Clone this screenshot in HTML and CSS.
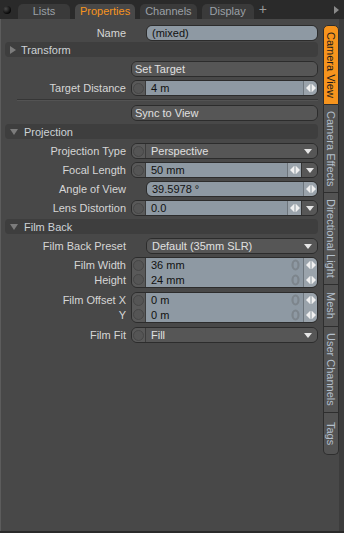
FILE: index.html
```html
<!DOCTYPE html>
<html lang="en">
<head>
    <meta charset="UTF-8">
    <title>Properties</title>
    <link rel="stylesheet" href="styles.css">
</head>
<body>
    <div class="tabbar">
        <span class="orb"></span>
        <div class="tab">Lists</div>
        <div class="tab ativo">Properties</div>
        <div class="tab">Channels</div>
        <div class="tab">Display</div>
        <span class="mais">+</span>
        <span class="seta-dir"></span>
    </div>

    <div class="painel">
        <div class="props">
            <div class="linha primeira">
                <label>Name</label>
                <div class="ctl recuo"><span class="val">(mixed)</span></div>
            </div>

            <div class="grupo fechado"><span class="tri"></span>Transform</div>

            <div class="linha">
                <label></label>
                <div class="ctl"><span class="val botao">Set Target</span></div>
            </div>
            <div class="linha">
                <label>Target Distance</label>
                <div class="ctl">
                    <span class="circ"></span>
                    <span class="val">4 m</span>
                    <span class="setas"><svg width="10" height="8" viewBox="0 0 10 8"><polygon points="0,4 4,0 4,8" /><rect x="4.6" y="0" width="0.8" height="8" /><polygon points="6,0 10,4 6,8" /></svg></span>
                </div>
            </div>
            <div class="divisor"></div>
            <div class="linha">
                <label></label>
                <div class="ctl"><span class="val botao">Sync to View</span></div>
            </div>

            <div class="grupo"><span class="tri"></span>Projection</div>

            <div class="linha">
                <label>Projection Type</label>
                <div class="ctl">
                    <span class="circ"></span>
                    <span class="val menu">Perspective<svg width="8" height="5" viewBox="0 0 8 5"><polygon points="0,0 8,0 4,5" /></svg></span>
                </div>
            </div>
            <div class="linha">
                <label>Focal Length</label>
                <div class="ctl">
                    <span class="circ"></span>
                    <span class="val">50 mm</span>
                    <span class="setas"><svg width="10" height="8" viewBox="0 0 10 8"><polygon points="0,4 4,0 4,8" /><rect x="4.6" y="0" width="0.8" height="8" /><polygon points="6,0 10,4 6,8" /></svg></span>
                    <span class="baixo"><svg width="8" height="5" viewBox="0 0 8 5"><polygon points="0,0 8,0 4,5" /></svg></span>
                </div>
            </div>
            <div class="linha">
                <label>Angle of View</label>
                <div class="ctl recuo">
                    <span class="val">39.5978 °</span>
                    <span class="setas"><svg width="10" height="8" viewBox="0 0 10 8"><polygon points="0,4 4,0 4,8" /><rect x="4.6" y="0" width="0.8" height="8" /><polygon points="6,0 10,4 6,8" /></svg></span>
                </div>
            </div>
            <div class="linha">
                <label>Lens Distortion</label>
                <div class="ctl">
                    <span class="circ"></span>
                    <span class="val">0.0</span>
                    <span class="setas"><svg width="10" height="8" viewBox="0 0 10 8"><polygon points="0,4 4,0 4,8" /><rect x="4.6" y="0" width="0.8" height="8" /><polygon points="6,0 10,4 6,8" /></svg></span>
                    <span class="baixo"><svg width="8" height="5" viewBox="0 0 8 5"><polygon points="0,0 8,0 4,5" /></svg></span>
                </div>
            </div>

            <div class="grupo"><span class="tri"></span>Film Back</div>

            <div class="linha">
                <label>Film Back Preset</label>
                <div class="ctl recuo">
                    <span class="val menu">Default (35mm SLR)<svg width="8" height="5" viewBox="0 0 8 5"><polygon points="0,0 8,0 4,5" /></svg></span>
                </div>
            </div>
            <div class="linha dupla">
                <div class="rotulos"><label>Film Width</label><label>Height</label></div>
                <div class="ctl duplo">
                    <div class="sub">
                        <span class="circ"></span>
                        <span class="val">36 mm<svg class="anel" width="9" height="12" viewBox="0 0 9 12"><ellipse cx="4.5" cy="6" rx="3" ry="4.5" /></svg></span>
                        <span class="setas"><svg width="10" height="8" viewBox="0 0 10 8"><polygon points="0,4 4,0 4,8" /><rect x="4.6" y="0" width="0.8" height="8" /><polygon points="6,0 10,4 6,8" /></svg></span>
                    </div>
                    <div class="sub">
                        <span class="circ"></span>
                        <span class="val">24 mm<svg class="anel" width="9" height="12" viewBox="0 0 9 12"><ellipse cx="4.5" cy="6" rx="3" ry="4.5" /></svg></span>
                        <span class="setas"><svg width="10" height="8" viewBox="0 0 10 8"><polygon points="0,4 4,0 4,8" /><rect x="4.6" y="0" width="0.8" height="8" /><polygon points="6,0 10,4 6,8" /></svg></span>
                    </div>
                </div>
            </div>
            <div class="linha dupla">
                <div class="rotulos"><label>Film Offset X</label><label>Y</label></div>
                <div class="ctl duplo">
                    <div class="sub">
                        <span class="circ"></span>
                        <span class="val">0 m<svg class="anel" width="9" height="12" viewBox="0 0 9 12"><ellipse cx="4.5" cy="6" rx="3" ry="4.5" /></svg></span>
                        <span class="setas"><svg width="10" height="8" viewBox="0 0 10 8"><polygon points="0,4 4,0 4,8" /><rect x="4.6" y="0" width="0.8" height="8" /><polygon points="6,0 10,4 6,8" /></svg></span>
                    </div>
                    <div class="sub">
                        <span class="circ"></span>
                        <span class="val">0 m<svg class="anel" width="9" height="12" viewBox="0 0 9 12"><ellipse cx="4.5" cy="6" rx="3" ry="4.5" /></svg></span>
                        <span class="setas"><svg width="10" height="8" viewBox="0 0 10 8"><polygon points="0,4 4,0 4,8" /><rect x="4.6" y="0" width="0.8" height="8" /><polygon points="6,0 10,4 6,8" /></svg></span>
                    </div>
                </div>
            </div>
            <div class="linha">
                <label>Film Fit</label>
                <div class="ctl">
                    <span class="circ"></span>
                    <span class="val menu">Fill<svg width="8" height="5" viewBox="0 0 8 5"><polygon points="0,0 8,0 4,5" /></svg></span>
                </div>
            </div>
        </div>

        <div class="abas">
            <div class="aba ativa">Camera View</div>
            <div class="aba">Camera Effects</div>
            <div class="aba">Directional Light</div>
            <div class="aba">Mesh</div>
            <div class="aba">User Channels</div>
            <div class="aba">Tags</div>
        </div>
    </div>
</body>
</html>
```

FILE: styles.css
```css
* {
    box-sizing: border-box;
}

body {
    margin: 0;
    width: 344px;
    height: 533px;
    overflow: hidden;
    background-color: #484848;
    font-family: "Liberation Sans", Arial, sans-serif;
    font-size: 11px;
}

/* barra de abas de cima */
.tabbar {
    display: flex;
    align-items: flex-end;
    height: 19px;
    background-color: #2a2a2a;
}

.orb {
    align-self: center;
    width: 8px;
    height: 8px;
    margin: 0 7px 0 3px;
    border-radius: 50%;
    background: radial-gradient(circle at 35% 35%, #4a4a4a, #080808 70%);
}

.tab {
    min-width: 52px;
    height: 15px;
    margin-right: 5px;
    padding: 0 5px;
    line-height: 15px;
    text-align: center;
    color: #9aa0a6;
    background-color: #3a3a3a;
    border-radius: 5px 5px 0 0;
}

.tab.ativo {
    color: #f7941d;
    background-color: #484848;
}

.mais {
    align-self: center;
    color: #9a9a9a;
    font-size: 14px;
    line-height: 19px;
}

.seta-dir {
    align-self: center;
    margin-left: auto;
    margin-right: 5px;
    width: 0;
    height: 0;
    border-top: 4px solid transparent;
    border-bottom: 4px solid transparent;
    border-left: 5px solid #8a8a8a;
}

/* painel */
.painel {
    display: flex;
    height: 514px;
    border-bottom: 2px solid #2a2a2a;
}

.props {
    flex: 1;
    padding: 6px 4px 0 0;
    border-left: 1px solid #5c5c5c;
}

.linha {
    display: grid;
    grid-template-columns: 125px 1fr;
    column-gap: 5px;
    align-items: center;
    height: 16px;
    margin-bottom: 3px;
}

.linha.primeira {
    margin-bottom: 1px;
}

.linha label,
.rotulos label {
    text-align: right;
    color: #d6d6d6;
    white-space: nowrap;
}

.linha.dupla {
    height: 31px;
    margin-bottom: 4px;
}

.rotulos {
    display: flex;
    flex-direction: column;
}

.rotulos label {
    height: 15px;
    line-height: 15px;
}

.grupo {
    display: flex;
    align-items: center;
    height: 15px;
    margin: 1px 0 4px 4px;
    padding-left: 5px;
    color: #cdd2d6;
    background-color: #3e3e3e;
    border-radius: 4px;
}

.tri {
    width: 0;
    height: 0;
    margin-right: 6px;
    border-left: 4px solid transparent;
    border-right: 4px solid transparent;
    border-top: 6px solid #7c7c7c;
}

.grupo.fechado .tri {
    margin-right: 5px;
    border-top: 4px solid transparent;
    border-bottom: 4px solid transparent;
    border-left: 6px solid #7c7c7c;
    border-right: 0;
}

.divisor {
    height: 2px;
    margin: 3px 0 4px 16px;
    border-top: 1px solid #363636;
    border-bottom: 1px solid #535353;
}

/* controles */
.ctl {
    display: flex;
    height: 16px;
    border: 1px solid #2c2c2c;
    border-radius: 6px;
    overflow: hidden;
}

.ctl.recuo {
    margin-left: 15px;
}

.ctl.duplo {
    flex-direction: column;
    height: 31px;
}

.sub {
    display: flex;
    height: 15px;
}

.circ {
    display: flex;
    align-items: center;
    justify-content: center;
    width: 14px;
    background-color: #595959;
    border-right: 1px solid #3c3c3c;
}

.circ::after {
    content: "";
    width: 9px;
    height: 9px;
    border-radius: 50%;
    border: 1px solid #474747;
    background-color: #555555;
}

.val {
    display: flex;
    align-items: center;
    flex: 1;
    padding-left: 5px;
    color: #111111;
    background-color: #8e99a3;
    white-space: nowrap;
}

.val.botao {
    padding-left: 3px;
    color: #e0e0e0;
    background-color: #565656;
}

.val.menu {
    justify-content: space-between;
    padding-right: 5px;
    color: #e0e0e0;
    background-color: #565656;
}

.val svg,
.baixo svg {
    fill: #e6e6e6;
}

.val .anel {
    margin-left: auto;
    margin-right: 3px;
    fill: none;
    stroke: #7d858c;
    stroke-width: 2.2;
}

.setas {
    display: flex;
    align-items: center;
    justify-content: center;
    width: 14px;
    background-color: #9aa3ab;
    border-left: 1px solid #6d757c;
}

.setas svg {
    fill: #f0f0f0;
}

.baixo {
    display: flex;
    align-items: center;
    justify-content: center;
    width: 16px;
    background-color: #575757;
    border-left: 1px solid #333333;
}

/* abas verticais */
.abas {
    width: 22px;
    padding: 6px 0 0 1px;
    border-right: 5px solid #3c3c3c;
}

.aba {
    writing-mode: vertical-rl;
    width: 16px;
    min-height: 42px;
    padding: 6px 0;
    line-height: 14px;
    text-align: center;
    color: #b3bfcb;
    background-color: #535353;
    border: 1px solid #2e2e2e;
    border-top: 0;
}

.aba:first-child {
    border-top: 1px solid #2e2e2e;
    border-radius: 5px 5px 0 0;
}

.aba:last-child {
    border-radius: 0 0 5px 5px;
}

.aba.ativa {
    color: #1b1b1b;
    background-color: #f7941d;
}
```
